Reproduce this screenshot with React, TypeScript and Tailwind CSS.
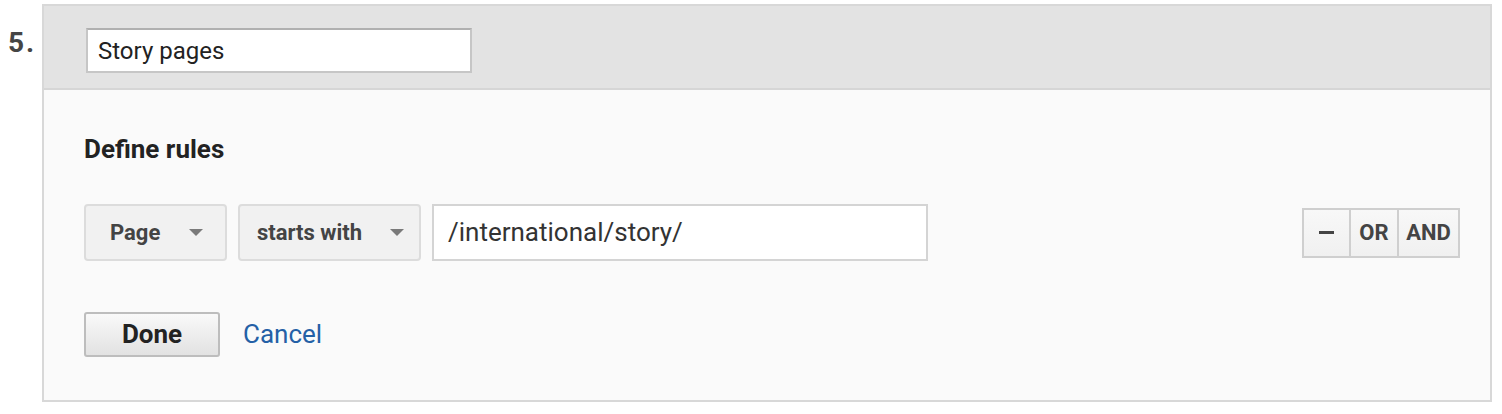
import React from "react";

function Caret() {
  return (
    <svg width="14" height="8" viewBox="0 0 14 8" className="shrink-0">
      <path d="M0 0 L14 0 L7 7 Z" fill="#7a7a7a" />
    </svg>
  );
}

export default function App() {
  return (
    <div
      className="w-[1502px] h-[414px] bg-white flex items-start"
      style={{ fontFamily: "Roboto, 'Liberation Sans', Arial, sans-serif" }}
    >
      <div className="w-[42px] shrink-0 pl-[8px] pt-[28px] text-[28px] leading-[30px] font-bold text-[#454545] tracking-[2px]">
        5.
      </div>
      <div className="mt-[4px] w-[1450px] border-2 border-[#d8d8d8] bg-[#fafafa]">
        <div className="h-[84px] bg-[#e3e3e3] border-b-2 border-[#d6d6d6] pl-[42px] pt-[22px]">
          <div className="w-[386px] h-[45px] bg-white border-2 border-[#c6c6c6] border-t-[#b0b0b0] flex items-center pl-[10px] text-[24px] text-[#222]">
            Story pages
          </div>
        </div>
        <div className="pl-[40px] pr-[30px] pt-[44px] pb-[43px]">
          <div className="text-[26px] leading-[30px] font-bold text-[#222]">Define rules</div>
          <div className="mt-[40px] flex items-center">
            <div className="w-[143px] h-[57px] rounded-[4px] border-2 border-[#dcdcdc] bg-[#f1f1f1] flex items-center pl-[24px] pr-[22px] justify-between">
              <span className="text-[22px] font-bold text-[#444]">Page</span>
              <Caret />
            </div>
            <div className="ml-[11px] w-[183px] h-[57px] rounded-[4px] border-2 border-[#dcdcdc] bg-[#f1f1f1] flex items-center pl-[17px] pr-[15px] justify-between">
              <span className="text-[22px] font-bold text-[#444]">starts with</span>
              <Caret />
            </div>
            <div className="ml-[11px] w-[496px] h-[57px] border-2 border-[#d4d4d4] bg-white flex items-center pl-[14px] text-[26px] text-[#333]">
              /international/story/
            </div>
            <div className="ml-auto flex h-[50px] border-2 border-[#cfcfcf] bg-gradient-to-b from-[#f8f8f8] to-[#f0f0f0]">
              <div className="w-[47px] flex items-center justify-center border-r-2 border-[#cfcfcf]">
                <div className="w-[15px] h-[3px] bg-[#444]" />
              </div>
              <div className="w-[48px] flex items-center justify-center border-r-2 border-[#cfcfcf] text-[22px] font-bold text-[#444]">
                OR
              </div>
              <div className="w-[59px] flex items-center justify-center text-[22px] font-bold text-[#444]">
                AND
              </div>
            </div>
          </div>
          <div className="mt-[51px] flex items-center">
            <div className="w-[136px] h-[45px] rounded-[3px] border-2 border-[#bdbdbd] bg-gradient-to-b from-[#f9f9f9] to-[#e2e2e2] flex items-center justify-center text-[26px] font-bold text-[#222]">
              Done
            </div>
            <span className="ml-[23px] text-[26px] text-[#2460a6]">Cancel</span>
          </div>
        </div>
      </div>
    </div>
  );
}
